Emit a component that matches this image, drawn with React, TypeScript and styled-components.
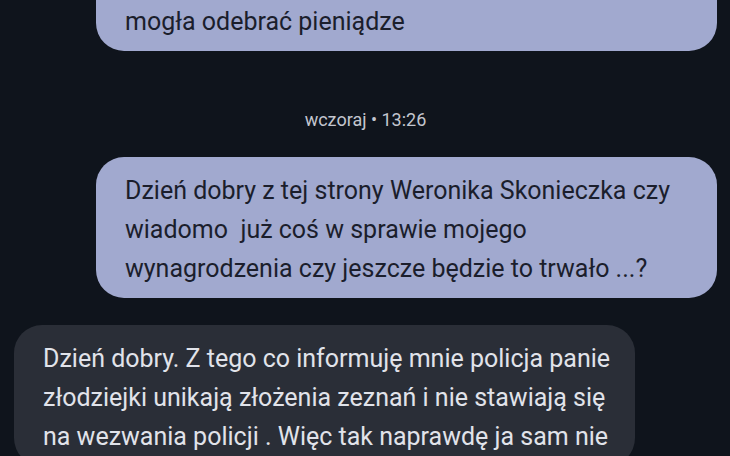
import styled, { createGlobalStyle } from 'styled-components';

const GlobalStyle = createGlobalStyle`
    html, body {
        margin: 0;
        padding: 0;
        background: #0f141c;
        overflow: hidden;
    }
`;

type Message = { id: string; from: 'me' | 'them'; lines: string[] };

const before: Message[] = [{ id: 'm1', from: 'me', lines: ['mogła odebrać pieniądze'] }];

const after: Message[] = [
    {
        id: 'm2',
        from: 'me',
        lines: [
            'Dzień dobry z tej strony Weronika Skonieczka czy',
            'wiadomo  już coś w sprawie mojego',
            'wynagrodzenia czy jeszcze będzie to trwało ...?'
        ]
    },
    {
        id: 'm3',
        from: 'them',
        lines: [
            'Dzień dobry. Z tego co informuję mnie policja panie',
            'złodziejki unikają złożenia zeznań i nie stawiają się',
            'na wezwania policji . Więc tak naprawdę ja sam nie'
        ]
    }
];

function renderMessage(message: Message) {
    return (
        <Bubble key={message.id} mine={message.from === 'me'}>
            {message.lines.map((line, index) => (
                <Line key={index}>{line}</Line>
            ))}
        </Bubble>
    );
}

export default function App() {
    return (
        <Screen>
            <GlobalStyle />
            <Thread>
                {before.map(renderMessage)}
                <Stamp>wczoraj • 13:26</Stamp>
                {after.map(renderMessage)}
            </Thread>
        </Screen>
    );
}

const Screen = styled.div`
    width: 730px;
    height: 456px;
    overflow: hidden;
    background: #0f141c;
    font-family: Roboto, 'Noto Sans', sans-serif;
`;

// scrolled view: the first bubble starts above the window
const Thread = styled.div`
    display: flex;
    flex-direction: column;
    gap: 27px;
    padding: 0 13px 0 14px;
`;

const Bubble = styled.div<{ mine: boolean }>`
    align-self: ${props => (props.mine ? 'flex-end' : 'flex-start')};
    width: 621px;
    box-sizing: border-box;
    padding: 14px 29px 10px;
    border-radius: 28px;
    background: ${props => (props.mine ? '#a1a9cf' : '#2a2e37')};
    color: ${props => (props.mine ? '#1b1e2c' : '#e1e3ea')};
    font-size: 25px;
    line-height: 39px;

    &:first-child {
        margin-top: -12px;
        border-top-left-radius: 0;
        border-top-right-radius: 0;
    }
`;

const Line = styled.div`
    white-space: pre;
`;

const Stamp = styled.div`
    align-self: center;
    margin: 32px 0 0;
    color: #c3c6cf;
    font-size: 18px;
    line-height: 20px;
`;
